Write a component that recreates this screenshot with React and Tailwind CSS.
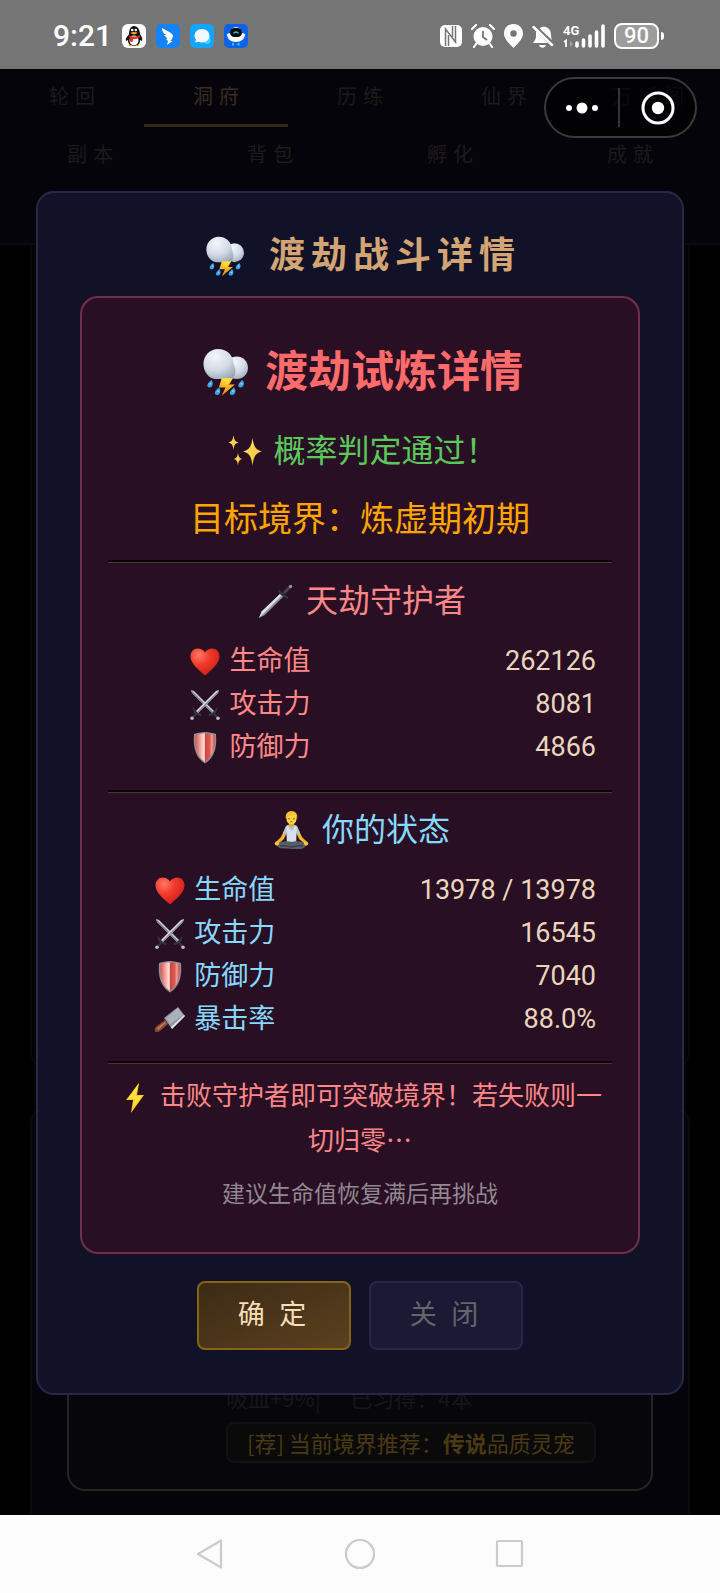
import React, { useState } from "react";

const StormIcon = ({ id, className }) => (
  <svg viewBox="0 0 48 51" className={className} aria-hidden="true">
    <defs>
      <radialGradient id={id} cx="0.38" cy="0.25" r="0.85">
        <stop offset="0" stopColor="#f4f7fb" />
        <stop offset="0.55" stopColor="#d3dbe6" />
        <stop offset="1" stopColor="#98a3b5" />
      </radialGradient>
      <linearGradient id={id + "Bolt"} x1="0" y1="0" x2="0" y2="1">
        <stop offset="0" stopColor="#ffd93a" />
        <stop offset="1" stopColor="#f08a10" />
      </linearGradient>
    </defs>
    <circle cx="36" cy="21" r="12" fill={`url(#${id})`} />
    <path
      d="M16 1c9 0 16 6 16.500 15 1 4 3 7 1.500 13-1 2-3 4-5 4H14C6 33 .5 25 .5 17 .5 8 7.500 1 16 1z"
      fill={`url(#${id})`}
    />
    <path d="M20 32h12l-4 7h6L20 51l4-9h-7z" fill={`url(#${id}Bolt)`} />
    <path d="M21 33h9l-5 7z" fill="#ffe24d" opacity="0.600" />
    <g fill="#3fa4e8">
      <path d="M9 34c2.500 3 1.500 8-2 8s-3.500-4 2-8z" />
      <path d="M17 42c2.500 3 1.500 8-2 8s-3.500-4 2-8z" />
      <path d="M33 42c3 3 1.500 8-2 8s-3.500-4 2-8z" />
      <path d="M42 34c3 3 1.500 8-2 8s-3.500-4 2-8z" />
    </g>
    <g fill="#8fd4ff">
      <circle cx="8" cy="38" r="1" />
      <circle cx="16" cy="46" r="1" />
      <circle cx="32" cy="46" r="1" />
      <circle cx="41" cy="38" r="1" />
    </g>
  </svg>
);

const SparklesIcon = () => (
  <svg viewBox="0 0 34 34" className="w-[34px]" aria-hidden="true">
    <defs>
      <linearGradient id="spark" x1="0" y1="0" x2="1" y2="1">
        <stop offset="0" stopColor="#ffe873" />
        <stop offset="1" stopColor="#fbb929" />
      </linearGradient>
    </defs>
    <g fill="url(#spark)">
      <path d="M24.500 4c1.200 8 2.500 11.500 9.500 13.500-7 2-8.300 5.500-9.500 14-1.200-8.500-2.500-12-9.500-14 7-2 8.300-5.500 9.500-13.500z" />
      <path d="M5.500 1c.7 5 1.400 6.500 5 7.500-3.600 1-4.300 2.500-5 7.500-.7-5-1.400-6.500-5-7.500 3.600-1 4.300-2.500 5-7.500z" />
      <path d="M10 18.500c.6 4.300 1.200 5.700 4.500 6.500-3.300.8-3.900 2.200-4.500 6.500-.6-4.300-1.200-5.700-4.500-6.500 3.300-.8 3.900-2.200 4.500-6.500z" />
    </g>
  </svg>
);

const DaggerIcon = () => (
  <svg viewBox="0 0 36 36" className="w-[35px]" aria-hidden="true">
    <path d="M1 35l3-7L24 9l3 3L7 32z" fill="#8e93a0" />
    <path d="M1 35l3-7L24 9l1.500 1.500z" fill="#dfe1e8" />
    <path d="M22 7c0 2 2 3 3 4s3 2 5 3" stroke="#2f3439" strokeWidth="2.400" fill="none" strokeLinecap="round" />
    <path d="M26.500 9.500l6-6" stroke="#3f444a" strokeWidth="3" />
    <circle cx="33.500" cy="2.500" r="1.800" fill="#8b8f96" />
  </svg>
);

const HeartIcon = () => (
  <svg viewBox="0 0 30 28" className="w-[30px]" aria-hidden="true">
    <defs>
      <radialGradient id="heart" cx="0.3" cy="0.25" r="0.9">
        <stop offset="0" stopColor="#ff7a66" />
        <stop offset="0.4" stopColor="#f23a2c" />
        <stop offset="1" stopColor="#c81812" />
      </radialGradient>
    </defs>
    <path
      d="M15 4.500C17 1.500 19.500.5 22 .5c4.500 0 7.500 3.500 7.500 8C29.500 16 21 22 15 27.500 9 22 .5 16 .5 8.500c0-4.500 3-8 7.500-8 2.500 0 5 1 7 4z"
      fill="url(#heart)"
    />
  </svg>
);

const SwordsIcon = () => (
  <svg viewBox="0 0 30 30" className="w-[30px]" aria-hidden="true">
    <path d="M1 0l3 1 20 20-2 2L2 3z" fill="#c9ccd4" />
    <path d="M1 0l1 3 20 20 1-1z" fill="#7f848f" />
    <path d="M29 0l-3 1L6 21l2 2L28 3z" fill="#dcdee4" />
    <path d="M29 0l-1 3L8 23l-1-1z" fill="#8b909b" />
    <g stroke="#33383c" strokeWidth="2" strokeLinecap="round" fill="none">
      <path d="M3.500 19l2 4 5 2M26.500 19l-2 4-5 2" />
      <path d="M5 25l-3 3M25 25l3 3" />
    </g>
    <circle cx="2" cy="28.200" r="1.800" fill="#b9bdc5" />
    <circle cx="28" cy="28.200" r="1.800" fill="#b9bdc5" />
  </svg>
);

const ShieldIcon = () => (
  <svg viewBox="0 0 30 32" className="w-[30px]" aria-hidden="true">
    <defs>
      <linearGradient id="shield" x1="0" x2="1">
        <stop offset="0" stopColor="#d8554e" />
        <stop offset="0.25" stopColor="#f0a49a" />
        <stop offset="0.42" stopColor="#ffd9d1" />
        <stop offset="0.5" stopColor="#f7b4aa" />
        <stop offset="0.52" stopColor="#cf4640" />
        <stop offset="0.75" stopColor="#dc5a52" />
        <stop offset="0.85" stopColor="#f0a097" />
        <stop offset="1" stopColor="#c9463f" />
      </linearGradient>
    </defs>
    <path d="M15 0c4 0 8 1 11 2 1 13-1 23-11 29.500C5 25 3 15 4 2c3-1 7-2 11-2z" fill="#8f9096" />
    <path d="M15 1.500c4 0 7 .7 9.500 1.500.8 12-1 21-9.500 27C6.500 24 4.700 15 5.500 3c2.500-.8 5.500-1.500 9.500-1.500z" fill="url(#shield)" />
  </svg>
);

const MonkIcon = () => (
  <svg viewBox="0 0 36 40" className="w-[35px]" aria-hidden="true">
    <path d="M10 21l-3 6-5 5 2 2 6-5 3-6zM26 21l3 6 5 5-2 2-6-5-3-6z" fill="#f2b632" />
    <path d="M12 16c1-1.500 3-2 6-2s5 .5 6 2l3 7-3 1-1-2v11H13V22l-1 2-3-1z" fill="#b9c3d2" />
    <path d="M14.500 15c1 4 2.500 5 3.500 5s2.500-1 3.500-5l2 2-1 13c-3 2-6 2-9 0l-1-13z" fill="#d7dfea" />
    <path d="M3 35c3-4 9-4.500 15-3 6-1.500 12-1 15 3-1 5-8 4.500-15 4S4 40 3 35z" fill="#575e66" />
    <path d="M6 36c5-1 8 0 12 1 4-1 7-2 12-1" stroke="#3b4148" strokeWidth="1.500" fill="none" />
    <circle cx="3" cy="33.500" r="2.200" fill="#f8c440" />
    <circle cx="33" cy="33.500" r="2.200" fill="#f8c440" />
    <path d="M15.500 11h5v4l-2.500 2-2.500-2z" fill="#dfa024" />
    <ellipse cx="18" cy="7.500" rx="5.300" ry="6.500" fill="#ffcf45" />
    <path d="M12.200 8c-1-5 2-8 5.800-8s6.800 3 5.800 8c-1-3-2-4-3-4-3 1-7 0-8.600 4z" fill="#f0c236" />
    <path d="M14.500 8h2M19.500 8h2M17 11h2" stroke="#8a5a14" strokeWidth="1" />
  </svg>
);

const KnifeIcon = () => (
  <svg viewBox="0 0 32 27" className="w-[32px]" aria-hidden="true">
    <path d="M1 25c-1-2 0-3 2-5l8-6 3 4-8 7c-2 1-4 2-5 0z" fill="#8c4a30" />
    <path d="M3 22l8-6 1 1-8 7z" fill="#c07a58" />
    <path d="M10 12L24 1l7 9-13 13z" fill="#8e969f" />
    <path d="M12 12L24 2l5 7-13 9z" fill="#a9b1b9" />
    <path d="M31 10L18 23l-1-2 13-12z" fill="#dfe4e8" />
  </svg>
);

const BoltIcon = () => (
  <svg viewBox="0 0 18 30" className="inline w-[18px]" aria-hidden="true">
    <path d="M13 0L0 17h7L5 30l13-18h-7z" fill="#fdca1c" />
    <path d="M13 0L2 15.500h7L7 25l9-12H9.500z" fill="#ffe13d" />
  </svg>
);

const Emoji = ({ className, children }) => (
  <span className={`inline-flex shrink-0 items-center justify-center ${className}`}>{children}</span>
);

const Divider = ({ className }) => (
  <hr className={`h-[3px] border-0 border-t-2 border-t-[#0a0308] bg-[#47382f] ${className}`} />
);

const guardianStats = [
  { icon: <HeartIcon />, label: "生命值", value: "262126" },
  { icon: <SwordsIcon />, label: "攻击力", value: "8081" },
  { icon: <ShieldIcon />, label: "防御力", value: "4866" },
];

const playerStats = [
  { icon: <HeartIcon />, label: "生命值", value: "13978 / 13978" },
  { icon: <SwordsIcon />, label: "攻击力", value: "16545" },
  { icon: <ShieldIcon />, label: "防御力", value: "7040" },
  { icon: <KnifeIcon />, label: "暴击率", value: "88.0%" },
];

const StatTable = ({ rows, labelClass }) => (
  <table className="mt-[17px] w-full table-fixed text-[27px] leading-[43px]">
    <tbody>
      {rows.map((row) => (
        <tr key={row.label}>
          <th scope="row" className={`p-0 font-normal ${labelClass}`}>
            <span className="flex h-[43px] items-center justify-center gap-[7px]">
              <Emoji className="w-[35px]">{row.icon}</Emoji>
              {row.label}
            </span>
          </th>
          <td className="p-0 pr-4 text-right text-[#ead6bc]">{row.value}</td>
        </tr>
      ))}
    </tbody>
  </table>
);

const StatusBar = () => (
  <header className="flex h-[69px] items-center justify-between bg-[#757575] pt-0.5 pr-[56px] pl-[53px] text-white">
    <div className="flex items-center gap-[10px]">
      <span className="text-[30px] leading-none font-medium">9:21</span>
      {/* penguin */}
      <svg viewBox="0 0 24 24" className="size-6" aria-hidden="true">
        <rect width="24" height="24" rx="6" fill="#fff" />
        <path d="M4 17c-1-3 2-5 3-7 0-5 2-8 5-8s6 3 6 8c1 2 3 4 2 7l-2-1c0 4-2 6-6 6s-6-2-6-6z" fill="#111" />
        <ellipse cx="12" cy="16.500" rx="4.500" ry="5" fill="#fff" />
        <path d="M6.500 11c3 2 8 2 11 0l.5 2c-2 2-5 2-7 2l-.5 3-3-.5.500-3z" fill="#e32a2a" />
        <circle cx="10.200" cy="6" r="1.300" fill="#fff" />
        <circle cx="13.800" cy="6" r="1.300" fill="#fff" />
        <path d="M8.500 8.700c2-1 5-1 7 0-2 2-5 2-7 0z" fill="#f5a81c" />
        <path d="M6 22c1-1.500 4-1.500 5 0zM13 22c1-1.500 4-1.500 5 0z" fill="#f5a81c" />
      </svg>
      {/* wing */}
      <svg viewBox="0 0 24 24" className="size-6" aria-hidden="true">
        <rect width="24" height="24" rx="5" fill="#1583f7" />
        <path d="M6 4l9 5c2 1.500 2.500 3 1.500 5l-2 3h2L11 21l1-4-2-2 1.500-.5L8 11l2 0C7 9 6 7 6 4z" fill="#fff" />
      </svg>
      {/* chat bubble */}
      <svg viewBox="0 0 24 24" className="size-6" aria-hidden="true">
        <rect width="24" height="24" rx="5" fill="#14a4fb" />
        <circle cx="17" cy="16.500" r="3.500" fill="#3fd0ff" />
        <path d="M12 5c4.500 0 7.500 3 7.500 6.800S16.500 18.500 12 18.500c-1.500 0-2.500-.3-3.500-.7L5 18.500l1-3c-1-1-1.500-2.300-1.500-3.700C4.500 8 7.500 5 12 5z" fill="#f2f8ff" />
      </svg>
      {/* robot */}
      <svg viewBox="0 0 24 24" className="size-6" aria-hidden="true">
        <rect width="24" height="24" rx="5" fill="#0c63ea" />
        <path d="M3 10l3-1c1-4 3-6 6-6s5 2 6 6l3 1c0 5-4 8-9 8s-9-3-9-8z" fill="#fff" />
        <rect x="6" y="4" width="12" height="9" rx="4.500" fill="#0a0a12" />
        <path d="M9.500 9.500c1-2 4-2 5 0" stroke="#35c9dc" strokeWidth="1.300" fill="none" />
        <path d="M9 19v2.500M14.500 19v2.500" stroke="#35c9dc" strokeWidth="2" />
      </svg>
    </div>

    <div className="flex items-center gap-[9px]">
      {/* nfc */}
      <svg viewBox="0 0 22 24" className="h-6 w-[22px]" aria-hidden="true">
        <rect x="0" y="1" width="22" height="22" rx="5" fill="#fff" />
        <path d="M5.500 22V5l10 13V2" stroke="#757575" strokeWidth="1.500" fill="none" />
        <path d="M8.500 22V11M12.500 13V2" stroke="#757575" strokeWidth="1.500" fill="none" />
      </svg>
      {/* alarm */}
      <svg viewBox="0 0 24 24" className="size-6" aria-hidden="true">
        <circle cx="12" cy="12.500" r="9.500" fill="#fff" />
        <path d="M1 5l4-4M23 5l-4-4M5 20l-2 3M19 20l2 3" stroke="#fff" strokeWidth="2.200" strokeLinecap="round" />
        <path d="M12 7v6l4 3" stroke="#757575" strokeWidth="1.800" fill="none" />
      </svg>
      {/* location */}
      <svg viewBox="0 0 19 24" className="h-6 w-[19px]" aria-hidden="true">
        <path d="M9.500 0c5.500 0 9.500 4 9.500 9.500 0 6-6 10.500-9.500 14.500C6 20 0 15.500 0 9.500 0 4 4 0 9.500 0z" fill="#fff" />
        <circle cx="9.500" cy="9.500" r="3.200" fill="#757575" />
      </svg>
      {/* muted bell */}
      <svg viewBox="0 0 22 24" className="h-6 w-[22px]" aria-hidden="true">
        <path d="M4 7l12 12H1c2-3 3-4 3-7zM7.500 4.500c3-3.500 11.500-2 11.500 6 0 2 .5 4 1 5.500zM7 21h7c-1 3.500-6 3.500-7 0z" fill="#fff" />
        <path d="M1.500 3l18.500 18" stroke="#fff" strokeWidth="2.500" strokeLinecap="round" />
      </svg>
      <div className="relative h-6 w-[42px]">
        <span className="absolute top-0 left-0 text-[13px] leading-[13px] font-bold">4G</span>
        <svg viewBox="0 0 42 24" className="h-6 w-[42px]" aria-hidden="true">
          <path d="M1 18l2-1.500V23" stroke="#fff" strokeWidth="1.800" fill="none" />
          <path d="M7 17v6l3-3z" fill="#a5a5a5" />
          <path d="M14 19v3M20.500 16v6M27 12v10M33.500 8v14M40 2v20" stroke="#fff" strokeWidth="3.600" strokeLinecap="round" />
        </svg>
      </div>
      <div className="flex items-center gap-0.5">
        <span className="flex h-[26px] w-[45px] items-center justify-center rounded-lg border-2 border-white bg-[#9c9c9c] text-[22px] leading-none font-medium">
          90
        </span>
        <span className="h-2 w-[3px] rounded-r bg-white" />
      </div>
    </div>
  </header>
);

const Capsule = () => (
  <div className="absolute top-2 right-[23px] z-20 flex h-[61px] w-[153px] items-center rounded-full border-2 border-[#3a3a3c] bg-black/60">
    <button type="button" aria-label="更多" className="flex h-full w-[72px] items-center justify-center">
      <svg viewBox="0 0 34 12" className="w-[34px]" fill="#fff">
        <circle cx="4" cy="6" r="3" />
        <circle cx="17" cy="6" r="5.500" />
        <circle cx="30" cy="6" r="3" />
      </svg>
    </button>
    <span className="h-[39px] w-0.5 bg-[#343436]" />
    <button type="button" aria-label="退出" className="flex h-full flex-1 items-center justify-center">
      <svg viewBox="0 0 34 34" className="w-[34px]">
        <circle cx="17" cy="17" r="15" fill="none" stroke="#fff" strokeWidth="3" />
        <circle cx="17" cy="17" r="6.200" fill="#fff" />
      </svg>
    </button>
  </div>
);

const tabRows = [
  ["轮回", "洞府", "历练", "仙界", "万妖阁"],
  ["副本", "背包", "孵化", "成就"],
];

const Tabs = ({ active, onSelect }) => (
  <nav className="border-b-2 border-[#0c0c10] bg-[#05040a] pb-[58px] text-[20px] tracking-[6px]">
    {tabRows.map((row, i) => (
      <div key={i} className="flex">
        {row.map((tab) => (
          <button
            key={tab}
            type="button"
            onClick={() => onSelect(tab)}
            className={`h-[58px] flex-1 basis-0 border-b-[3px] pl-1.5 ${
              tab === active ? "border-[#33281a] text-[#3a2c22]" : "border-transparent text-[#1d1b1c]"
            }`}
          >
            {tab}
          </button>
        ))}
      </div>
    ))}
  </nav>
);

const App = () => {
  const [tab, setTab] = useState("洞府");

  return (
    <div
      lang="zh-CN"
      className="flex min-h-screen flex-col bg-black font-[Roboto,'Noto_Sans_CJK_SC',sans-serif]"
    >
      <StatusBar />

      <main className="relative grid flex-1 overflow-hidden">
        <Capsule />

        {/* page behind the dialog */}
        <div className="flex flex-col [grid-area:1/1]">
          <Tabs active={tab} onSelect={setTab} />
          <section className="mx-[30px] flex-1 rounded-b-[18px] border-2 border-t-0 border-[#09090b]" />
          <section className="mx-[30px] mt-[35px] flex h-[410px] flex-col rounded-t-[18px] border-2 border-b-0 border-[#0a090d] bg-[#05040a] px-[35px] pb-6">
            <div className="flex flex-1 flex-col items-start justify-end rounded-[18px] border-2 border-[#2b241c] bg-[#07060b] pb-[26px] pl-[157px] font-['Noto_Sans_CJK_SC',sans-serif] text-[22px]">
              <p className="leading-8 whitespace-pre text-[#17161a]">吸血+9%|{"      "}已习得：4本</p>
              <p className="mt-[9px] rounded-lg border-2 border-[#111112] bg-[#0a0a0b] px-[19px] leading-[37px] text-[#4b3913]">
                [荐] 当前境界推荐：<b>传说</b>品质灵宠
              </p>
            </div>
          </section>
        </div>

        <div className="z-10 flex items-center px-9 pt-0.5 [grid-area:1/1]">
          <div
            role="dialog"
            aria-labelledby="dialog-title"
            className="w-full rounded-[18px] border-2 border-[#292646] bg-[#111128] px-[42px] pt-[38px] pb-[43px]"
          >
            <h1
              id="dialog-title"
              className="flex items-center justify-center gap-[18px] text-[36px] leading-[50px] font-bold tracking-[6px] text-[#d4a574]"
            >
              <Emoji className="w-[52px]">
                <StormIcon id="cloudA" className="w-[38px]" />
              </Emoji>
              渡劫战斗详情
            </h1>

            <div className="mt-[15px] rounded-[18px] border-2 border-[#70304a] bg-[#280f24] px-[26px] pt-11 pb-[41px] text-center">
              <h2 className="flex items-center justify-center gap-[11px] text-[43px] leading-[60px] font-bold text-[#ff6b6b]">
                <Emoji className="w-[57px]">
                  <StormIcon id="cloudB" className="w-[45px]" />
                </Emoji>
                渡劫试炼详情
              </h2>
              <p className="mt-[26px] flex items-center justify-center gap-1.5 text-[32px] leading-[46px] text-[#5bc85b]">
                <Emoji className="w-[45px]">
                  <SparklesIcon />
                </Emoji>
                概率判定通过！
              </p>
              <p className="mt-5 text-[34px] leading-[50px] text-[#ffa500]">目标境界：炼虚期初期</p>

              <Divider className="mt-4" />
              <h3 className="mt-4 flex items-center justify-center gap-2 text-[32px] leading-[44px] text-[#ff8787]">
                <Emoji className="w-[44px]">
                  <DaggerIcon />
                </Emoji>
                天劫守护者
              </h3>
              <StatTable rows={guardianStats} labelClass="w-[56%] text-[#ff8787]" />

              <Divider className="mt-[21px]" />
              <h3 className="mt-[15px] flex items-center justify-center gap-2 text-[32px] leading-[44px] text-[#87d8ff]">
                <Emoji className="w-[44px]">
                  <MonkIcon />
                </Emoji>
                你的状态
              </h3>
              <StatTable rows={playerStats} labelClass="w-[42%] text-[#87d8ff]" />

              <Divider className="mt-5" />
              <p className="mt-[7px] font-['Noto_Sans_CJK_SC',sans-serif] text-[26px] leading-[45px] text-[#ff8787]">
                <Emoji className="mr-2 h-[30px] w-[34px] align-middle">
                  <BoltIcon />
                </Emoji>
                击败守护者即可突破境界！若失败则一切归零…
              </p>
              <p className="mt-[18px] text-[23px] leading-8 text-[#938890]">建议生命值恢复满后再挑战</p>
            </div>

            <div className="mt-[27px] flex justify-center gap-[18px] text-[27px] tracking-[4px]">
              <button
                type="button"
                className="h-[69px] w-[154px] rounded-lg border-2 border-[#856514] bg-linear-to-br from-[#3b2b14] to-[#5c4020] text-[#f5deb8]"
              >
                确 定
              </button>
              <button
                type="button"
                className="h-[69px] w-[154px] rounded-lg border-2 border-[#26264a] bg-[#1a1a35] text-[#66656a]"
              >
                关 闭
              </button>
            </div>
          </div>
        </div>
      </main>

      <footer className="flex h-[78px] items-center justify-center gap-[118px] bg-[#fcfcfc]">
        <button type="button" aria-label="返回">
          <svg viewBox="0 0 32 32" className="size-8" fill="none" stroke="#cbcbcb" strokeWidth="2.200">
            <path d="M27 2.500v27L4 16z" strokeLinejoin="round" />
          </svg>
        </button>
        <button type="button" aria-label="主页">
          <svg viewBox="0 0 32 32" className="size-8" fill="none" stroke="#cbcbcb" strokeWidth="2.200">
            <circle cx="16" cy="16" r="14" />
          </svg>
        </button>
        <button type="button" aria-label="最近任务">
          <svg viewBox="0 0 32 32" className="size-8" fill="none" stroke="#cbcbcb" strokeWidth="2.200">
            <rect x="3" y="3" width="25" height="25" rx="1" />
          </svg>
        </button>
      </footer>
    </div>
  );
};

export default App;
